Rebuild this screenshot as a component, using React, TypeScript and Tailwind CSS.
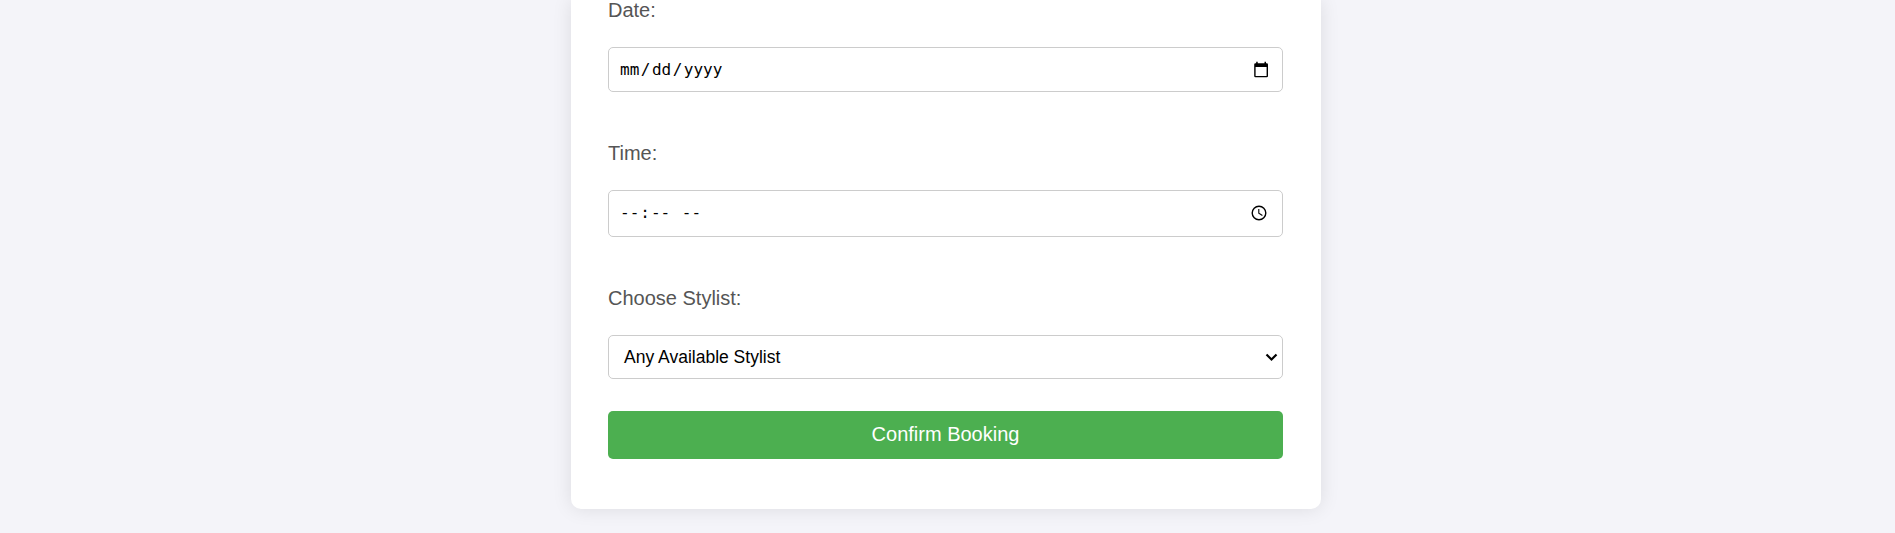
import type { ReactNode } from "react";

function Field({ label, className, children }: { label: string; className: string; children: ReactNode }) {
  return (
    <div className={className}>
      <div className="h-[23px] text-[20px] leading-[23px] text-[#555]">{label}</div>
      {children}
    </div>
  );
}

const box = "flex w-full items-center rounded-[5px] border border-[#ccc] bg-white text-black";

function CalendarIcon() {
  return (
    <svg width="16" height="17" viewBox="0 0 16 17" className="mr-[13px] shrink-0">
      <path d="M3.200.8h1.500v1.500h6.800V.8H13v1.500h.7q1.300 0 1.300 1.300v11.400q0 1.300-1.300 1.300H2.500q-1.300 0-1.300-1.300V3.600q0-1.300 1.300-1.300h.7zM2.600 5.900v9h11v-9z" fillRule="evenodd" fill="#000" />
    </svg>
  );
}

function ClockIcon() {
  return (
    <svg width="16" height="16" viewBox="0 0 16 16" className="mr-[15px] mb-px shrink-0" fill="none" stroke="#000">
      <circle cx="8" cy="8" r="6.800" strokeWidth="1.400" />
      <path d="M7.800 4v4.300l3.600 2.200" strokeWidth="1.100" />
    </svg>
  );
}

export default function App() {
  return (
    <div className="flex h-[533px] justify-center overflow-hidden bg-[#f4f4f9] pl-[-3px] font-['Liberation_Sans',Arial,sans-serif]">
      <main className="mr-[3px] h-[509px] w-[750px] rounded-b-[10px] bg-white pr-[38px] pl-[37px] shadow-[0_0_19px_rgba(0,0,0,0.1)]">
        <Field label="Date:" className="-mt-px">
          <div className={`${box} mt-[25px] h-[45px] justify-between pl-[11px]`}>
            <span className="flex gap-[2.500px] font-['DejaVu_Sans_Mono',monospace] text-[16px] leading-5">
              <span>mm</span><span className="-mx-px">/</span><span>dd</span><span className="-mx-px">/</span><span>yyyy</span>
            </span>
            <CalendarIcon />
          </div>
        </Field>
        <Field label="Time:" className="mt-[50px]">
          <div className={`${box} mt-[25px] h-[47px] justify-between pl-[11px]`}>
            <span className="mb-[2px] flex whitespace-pre font-['DejaVu_Sans_Mono',monospace] text-[16px] leading-5">
              <span>--</span><span className="mx-[1px]">:</span><span>--</span><span className="mx-[1px]"> </span><span>--</span>
            </span>
            <ClockIcon />
          </div>
        </Field>
        <Field label="Choose Stylist:" className="mt-[50px]">
          <div className={`${box} mt-[25px] h-[44px] justify-between pl-[15px] text-[17.500px]`}>
            <span>Any Available Stylist</span>
            <svg width="13" height="10" viewBox="0 0 13 10" className="mr-[4px]" fill="none" stroke="#000" strokeWidth="2.200">
              <path d="M1.500 2.500 6.500 7.500l5-5" />
            </svg>
          </div>
        </Field>
        <button className="mt-[32px] block h-[48px] w-full rounded-[5px] bg-[#4caf50] pb-[2px] text-[20px] leading-[23px] text-white">
          Confirm Booking
        </button>
      </main>
    </div>
  );
}
